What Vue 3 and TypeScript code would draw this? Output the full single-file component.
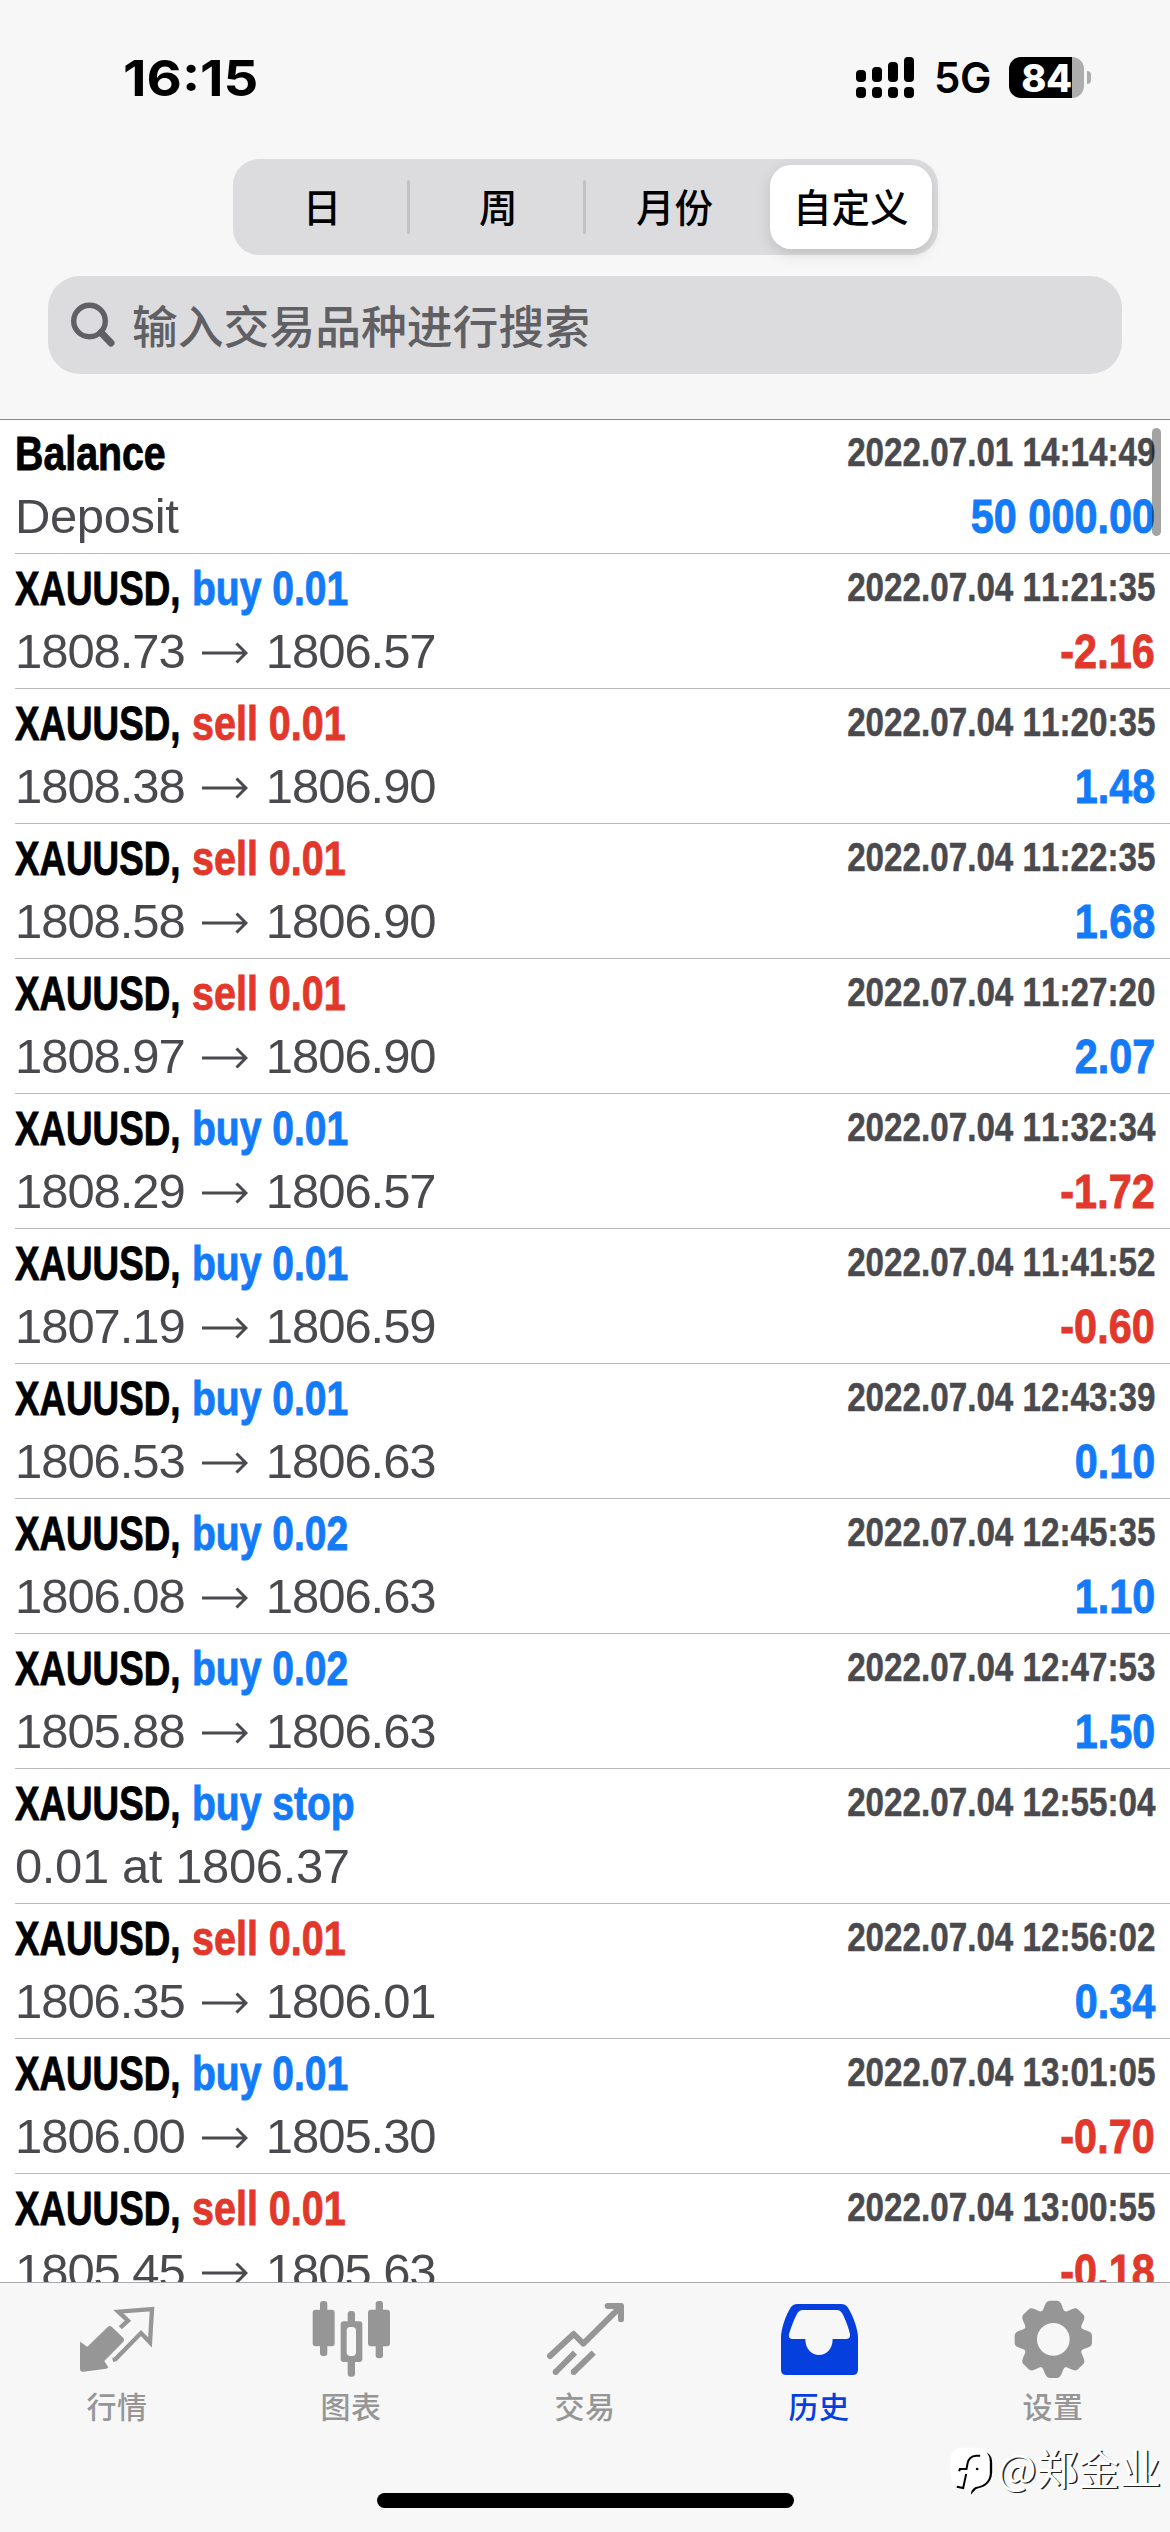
<script setup lang="ts">
interface Deal {
  side: 'buy' | 'sell' | ''
  label: string
  open: string
  close: string
  time: string
  profit: string
}

function deal(side: Deal['side'], volume: string, open: string, close: string, time: string, profit: string): Deal {
  return { side, label: `${side} ${volume}`.trim(), open, close, time, profit }
}

const deals: Deal[] = [
  deal('', '', 'Deposit', '', '2022.07.01 14:14:49', '50 000.00'),
  deal('buy', '0.01', '1808.73', '1806.57', '2022.07.04 11:21:35', '-2.16'),
  deal('sell', '0.01', '1808.38', '1806.90', '2022.07.04 11:20:35', '1.48'),
  deal('sell', '0.01', '1808.58', '1806.90', '2022.07.04 11:22:35', '1.68'),
  deal('sell', '0.01', '1808.97', '1806.90', '2022.07.04 11:27:20', '2.07'),
  deal('buy', '0.01', '1808.29', '1806.57', '2022.07.04 11:32:34', '-1.72'),
  deal('buy', '0.01', '1807.19', '1806.59', '2022.07.04 11:41:52', '-0.60'),
  deal('buy', '0.01', '1806.53', '1806.63', '2022.07.04 12:43:39', '0.10'),
  deal('buy', '0.02', '1806.08', '1806.63', '2022.07.04 12:45:35', '1.10'),
  deal('buy', '0.02', '1805.88', '1806.63', '2022.07.04 12:47:53', '1.50'),
  deal('buy', 'stop', '0.01 at 1806.37', '', '2022.07.04 12:55:04', ''),
  deal('sell', '0.01', '1806.35', '1806.01', '2022.07.04 12:56:02', '0.34'),
  deal('buy', '0.01', '1806.00', '1805.30', '2022.07.04 13:01:05', '-0.70'),
  deal('sell', '0.01', '1805.45', '1805.63', '2022.07.04 13:00:55', '-0.18'),
]

const periods = ['日', '周', '月份', '自定义']
const toothAngles = [0, 45, 90, 135, 180, 225, 270, 315]
</script>

<template>
  <div class="screen">
    <header class="top">
      <div class="status">
        <span class="clock">16:15</span>
        <div class="indicators">
          <svg class="signal" viewBox="0 0 58 41" width="58" height="41">
            <rect x="0" y="13" width="10" height="12" rx="4" />
            <rect x="16" y="10" width="10" height="15" rx="4" />
            <rect x="32" y="5" width="10" height="20" rx="4" />
            <rect x="48" y="0" width="10" height="25" rx="4" />
            <rect v-for="x in [0, 16, 32, 48]" :key="x" :x="x" y="30" width="10" height="11" rx="4" />
          </svg>
          <span class="network">5G</span>
          <div class="battery"><span>84</span></div>
          <i class="battery-tip"></i>
        </div>
      </div>
      <nav class="segments">
        <button v-for="(p, i) in periods" :key="p" class="segment" :class="{ active: i === 3, divided: i < 2 }">
          <span>{{ p }}</span>
        </button>
      </nav>
      <div class="search">
        <svg viewBox="0 0 46 46" width="46" height="46">
          <circle cx="19.5" cy="19" r="15.8" />
          <path d="M31 30.5L41 41" />
        </svg>
        <span>输入交易品种进行搜索</span>
      </div>
    </header>

    <main class="list">
      <article v-for="(d, i) in deals" :key="i" class="row">
        <div class="line head">
          <b v-if="d.side" class="symbol"><span>XAUUSD,</span></b>
          <b v-else class="balance"><span>Balance</span></b>
          <b class="side" :class="d.side"><span>{{ d.label }}</span></b>
          <b class="time"><span>{{ d.time }}</span></b>
        </div>
        <div class="line detail">
          <template v-if="d.close">
            <span class="price">{{ d.open }}</span>
            <svg class="arrow" viewBox="0 0 46 22" width="46" height="22"><path d="M0 11H44M34.5 1.5L44 11L34.5 20.5" /></svg>
            <span class="price">{{ d.close }}</span>
          </template>
          <span v-else class="note">{{ d.open }}</span>
          <b class="profit" :class="{ loss: d.profit.startsWith('-') }"><span>{{ d.profit }}</span></b>
        </div>
      </article>
      <i class="scrollbar"></i>
    </main>

    <footer class="tabs">
      <div class="tab">
        <svg viewBox="234 417 234 240">
          <path d="M240 545L262 560L324 500Q330 495 336 501L370 534Q375 540 370 545L313 603L325 622Q324 625 319 626L250 635Q240 636 240 627Z" />
          <path class="stroke" stroke-width="13" d="M361 503L384 482L355 455L456 447L450 547L423 519L346 598L338 600" />
        </svg>
        <span>行情</span>
      </div>
      <div class="tab">
        <svg viewBox="936 417 234 240">
          <rect x="960" y="423" width="22" height="165" rx="9" />
          <rect x="938" y="449" width="66" height="110" rx="9" />
          <rect x="1043" y="453" width="22" height="197" rx="9" />
          <rect x="1022" y="484" width="65" height="122" rx="9" />
          <rect class="hole" x="1040" y="501" width="28" height="87" rx="11" />
          <rect x="1127" y="423" width="22" height="172" rx="9" />
          <rect x="1104" y="449" width="66" height="110" rx="9" />
        </svg>
        <span>图表</span>
      </div>
      <div class="tab">
        <svg viewBox="438 417 234 240">
          <g class="stroke" stroke-width="18" stroke-linecap="round" stroke-linejoin="round">
            <path d="M450 588L521 522L550 551L662 440M623 438H663V478" />
          </g>
          <g class="stroke" stroke-width="18">
            <path d="M467 636L525 578M521 636L581 578" />
          </g>
          <circle cx="467" cy="636" r="9" />
          <circle cx="521" cy="636" r="9" />
        </svg>
        <span>交易</span>
      </div>
      <div class="tab current">
        <svg viewBox="30 417 234 240">
          <path
            fill-rule="evenodd"
            d="M82 432H213Q226 432 233 442C250 468 264 510 264 532V629Q264 645 248 645H49Q33 645 33 629V532C33 510 46 466 63 441Q70 432 82 432ZM97 450Q88 450 83 458C72 477 62 505 57 523Q54 537 68 537H106C106 601 188 601 188 537H228Q242 537 240 523C236 503 226 477 216 459Q211 450 202 450Z"
          />
        </svg>
        <span>历史</span>
      </div>
      <div class="tab">
        <svg viewBox="732 417 234 240">
          <g transform="translate(850 538)">
            <circle r="91" />
            <path
              v-for="a in toothAngles"
              :key="a"
              :transform="`rotate(${a})`"
              d="M-42 -76C-28 -88 -30 -92 -24 -105Q-20 -116 -10 -116H10Q20 -116 24 -105C30 -92 28 -88 42 -76Z"
            />
            <circle class="hole" r="49" />
          </g>
        </svg>
        <span>设置</span>
      </div>
      <i class="home"></i>
      <div class="watermark">
        <svg viewBox="28 48 128 144" width="43" height="48">
          <path class="badge" d="M62 50H118Q149 52 149 85V130Q148 163 106 166L92 182L88 168Q28 172 29 128V86Q30 51 62 50Z" />
          <path class="crescent" d="M138 64Q154 74 154 96V124Q152 166 108 173Q104 174 90 191Q90 176 104 168Q144 162 147 128V92Q147 76 138 64Z" />
          <path class="mark" d="M118 74H106Q84 75 80 98L77 114H57L55 121M76 129L67 171L48 167" />
          <circle cx="109" cy="114" r="4" />
        </svg>
        <span>@郑金业</span>
      </div>
    </footer>
  </div>
</template>

<style>
body {
  margin: 0;
}
</style>

<style scoped>
.screen {
  width: 1170px;
  height: 2532px;
  display: flex;
  flex-direction: column;
  overflow: hidden;
  background: #fff;
  font-family: 'Liberation Sans', 'Noto Sans CJK SC', sans-serif;
}

.top {
  box-sizing: border-box;
  height: 420px;
  flex: none;
  background: #f7f7f7;
  border-bottom: 1px solid #88888a;
}

.status {
  box-sizing: border-box;
  height: 159px;
  padding: 57px 79px 0 123px;
  display: flex;
  justify-content: space-between;
  font-family: Inter, sans-serif;
}

.clock {
  font-size: 50px;
  font-weight: 700;
  line-height: 42px;
  transform: scaleX(1.09);
  transform-origin: left center;
}

.indicators {
  height: 41px;
  display: flex;
  align-items: center;
}

.network {
  margin-left: 20px;
  width: 56px;
  font-size: 42px;
  font-weight: 600;
  line-height: 43px;
  letter-spacing: -0.5px;
  white-space: nowrap;
}

.battery {
  margin-left: 19px;
  width: 75px;
  height: 41px;
  border-radius: 12px;
  background: linear-gradient(90deg, #000 63px, #adadad 63px);
  color: #fff;
  font-size: 38px;
  font-weight: 800;
  line-height: 42px;
  text-align: center;
  letter-spacing: -0.5px;
}

.battery-tip {
  margin-left: 3px;
  width: 4px;
  height: 13px;
  border-radius: 0 4px 4px 0;
  background: #adadad;
}

.segments {
  box-sizing: border-box;
  width: 705px;
  height: 96px;
  margin: 0 auto;
  display: flex;
  border-radius: 26px;
  background: #dcdcde;
}

.segment {
  position: relative;
  flex: 1;
  border: 0;
  padding: 6px 6px 6px 9px;
  background: none;
  color: #000;
  font: 500 38.5px/80px 'Noto Sans CJK SC', sans-serif;
}

.segment span {
  display: block;
  height: 84px;
  border-radius: 21px;
  white-space: nowrap;
}

.divided::after {
  content: '';
  position: absolute;
  right: -1px;
  top: 21px;
  width: 3px;
  height: 54px;
  border-radius: 2px;
  background: #c2c2c4;
}

.active span {
  background: #fff;
  box-shadow: 0 5px 14px rgba(0, 0, 0, 0.13);
}

.search {
  height: 98px;
  margin: 21px 48px 0;
  padding-left: 22px;
  display: flex;
  align-items: center;
  border-radius: 32px;
  background: #dcdcde;
  color: #606064;
  font: 500 45.8px/96px 'Noto Sans CJK SC', sans-serif;
}

.search span {
  height: 98px;
}

.search svg {
  margin-right: 16px;
  fill: none;
  stroke: #606064;
  stroke-width: 5.4;
}

.search path {
  stroke-width: 7;
  stroke-linecap: round;
}

.list {
  position: relative;
  height: 1862px;
  flex: none;
  overflow: hidden;
}

.row {
  box-sizing: border-box;
  height: 135px;
  margin-left: 15px;
  padding: 3px 15px 0 0;
  border-bottom: 1px solid #bababc;
}

.row:first-of-type {
  height: 134px;
  padding-top: 2px;
}

.line {
  display: flex;
  height: 62px;
  line-height: 62px;
  font-size: 49px;
  font-kerning: none;
  white-space: nowrap;
}

.detail {
  margin-top: 1px;
  align-items: center;
  color: #4a4a4e;
}

.line b span {
  display: inline-block;
  transform-origin: left center;
  -webkit-text-stroke: 0.9px currentColor;
}

.symbol {
  width: 177px;
}

.symbol span {
  transform: scaleX(0.75);
}

.balance span {
  transform: scaleX(0.802);
}

.side span {
  transform: scaleX(0.797);
}

.side.sell span {
  transform: scaleX(0.806);
}

.buy {
  color: #147bf8;
}

.sell {
  color: #e2382c;
}

.time,
.profit {
  flex: 1;
  width: 0;
  display: flex;
  justify-content: flex-end;
}

.time {
  font-size: 40px;
  line-height: 60px;
  color: #4a4a4e;
}

.line .time span {
  transform: scaleX(0.83);
  transform-origin: right center;
  -webkit-text-stroke-width: 0.5px;
}

.profit {
  color: #147bf8;
}

.line .profit span {
  transform: scaleX(0.845);
  transform-origin: right center;
}

.loss {
  color: #e2382c;
}

.price {
  letter-spacing: -1.05px;
}

.note {
  letter-spacing: -0.4px;
}

.arrow {
  margin: 4px 18px 0 17px;
  fill: none;
  stroke: #4a4a4e;
  stroke-width: 3;
}

.scrollbar {
  position: absolute;
  right: 9px;
  top: 8px;
  width: 9px;
  height: 108px;
  border-radius: 5px;
  background: rgba(0, 0, 0, 0.36);
}

.tabs {
  position: relative;
  box-sizing: border-box;
  height: 250px;
  flex: none;
  display: flex;
  background: #f7f7f7;
  border-top: 1px solid #aaaaac;
}

.tab {
  flex: 1;
  padding-top: 16px;
  display: flex;
  flex-direction: column;
  align-items: center;
  color: #969696;
  fill: #969696;
  font: 500 30px/44px 'Noto Sans CJK SC', sans-serif;
}

.tab svg {
  width: 78px;
  height: 80px;
  margin-bottom: 4px;
}

.tab span {
  letter-spacing: 0.5px;
}

.stroke {
  fill: none;
  stroke: #969696;
}

.hole {
  fill: #f7f7f7;
}

.current {
  color: #0540de;
  fill: #0540de;
}

.home {
  position: absolute;
  left: 377px;
  bottom: 24px;
  width: 417px;
  height: 15px;
  border-radius: 8px;
  background: #000;
}

.watermark {
  position: absolute;
  right: 9px;
  top: 163px;
  display: flex;
  align-items: flex-start;
  color: #fff;
  font: 400 41.5px/42px 'Noto Sans CJK SC', sans-serif;
  text-shadow: 1.5px 1px 0 #222;
}

.watermark svg {
  margin: 1px 4px 0 0;
}

.badge {
  fill: #fff;
}

.mark {
  fill: none;
  stroke: #000;
  stroke-width: 6;
}
</style>
